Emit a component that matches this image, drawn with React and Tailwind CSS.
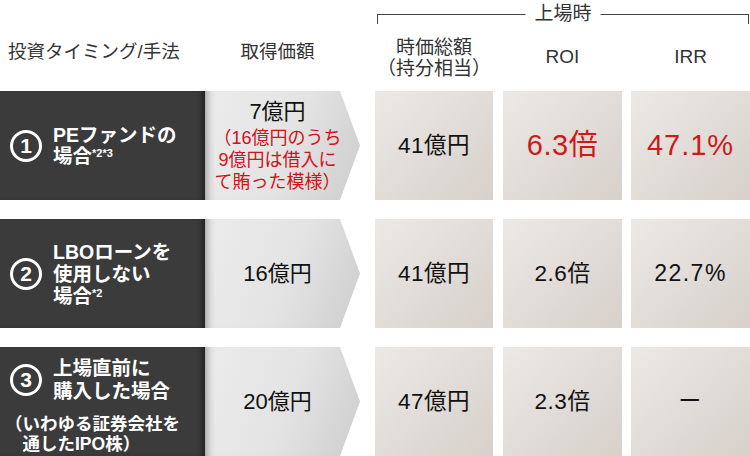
const font = { fontFamily: '"Liberation Sans", "Noto Sans CJK JP", sans-serif' }

const rows = [
    {
        no: '1',
        label: (
            <div className="text-[19.5px] leading-[21px] font-bold text-white">
                <div>PEファンドの</div>
                <div>
                    場合<sup className="text-[11px]">*2*3</sup>
                </div>
            </div>
        ),
        price: (
            <>
                <div className="text-[22px] leading-[26px] text-[#111]">7億円</div>
                <div className="mt-[2px] text-[18px] leading-[22px] text-[#d0121b]">
                    <div>（16億円のうち</div>
                    <div>9億円は借入に</div>
                    <div>て賄った模様）</div>
                </div>
            </>
        ),
        cap: '41億円',
        roi: '6.3倍',
        irr: '47.1%',
        red: true,
    },
    {
        no: '2',
        label: (
            <div className="text-[19.5px] leading-[22px] font-bold text-white">
                <div>LBOローンを</div>
                <div>使用しない</div>
                <div>
                    場合<sup className="text-[11px]">*2</sup>
                </div>
            </div>
        ),
        price: <div className="text-[22px] text-[#111]">16億円</div>,
        cap: '41億円',
        roi: '2.6倍',
        irr: '22.7%',
    },
    {
        no: '3',
        label: (
            <div className="text-[19.5px] leading-[23px] font-bold text-white">
                <div>上場直前に</div>
                <div>購入した場合</div>
            </div>
        ),
        note: (
            <div className="mt-[11px] pl-[5px] text-[17.5px] leading-[20px] font-bold text-white">
                <div>（いわゆる証券会社を</div>
                <div className="pl-[1em]">通したIPO株）</div>
            </div>
        ),
        price: <div className="text-[22px] text-[#111]">20億円</div>,
        cap: '47億円',
        roi: '2.3倍',
        irr: 'ー',
        pad: 'pt-[7px]',
    },
]

const Circle = ({ n }) => (
    <div className="flex h-[32px] w-[32px] shrink-0 items-center justify-center rounded-full border-[3px] border-white text-[21px] leading-none font-bold text-white">
        {n}
    </div>
)

const Cell = ({ w, className = '', children }) => (
    <div
        className={`flex items-center justify-center bg-linear-to-br from-[#ece9e6] to-[#d7d0cb] ${w} ${className}`}
    >
        {children}
    </div>
)

const Row = ({ row, first }) => (
    <div className={`flex h-[109px] ${first ? '' : 'mt-[19px]'}`}>
        <div
            className={`relative z-10 flex w-[205px] flex-col justify-center bg-[#3b3b3b] shadow-[inset_-6px_0_6px_-4px_rgba(0,0,0,0.55)] ${row.pad || ''}`}
        >
            <div className="flex items-center gap-[11px] pl-[10px]">
                <Circle n={row.no} />
                {row.label}
            </div>
            {row.note}
        </div>
        <div className="flex w-[155px] flex-col items-center justify-center bg-[linear-gradient(110deg,#ececec_0%,#e3e3e3_55%,#cdcdcd_100%)] pr-[10px] text-center shadow-[inset_10px_0_8px_-8px_rgba(0,0,0,0.35)] [clip-path:polygon(0_0,135px_0,100%_50%,135px_100%,0_100%)]">
            {row.price}
        </div>
        <Cell w="w-[118px]" className="ml-[15px] text-[22.5px] tracking-[0.5px] text-[#111]">
            {row.cap}
        </Cell>
        <Cell
            w="w-[119px]"
            className={`ml-[10px] ${row.red ? 'text-[29px] tracking-[0.5px] text-[#cc1a1a]' : 'text-[22.5px] tracking-[0.5px] text-[#111]'}`}
        >
            {row.roi}
        </Cell>
        <Cell
            w="w-[119px]"
            className={`ml-[9px] ${row.red ? 'text-[29px] tracking-[1px] text-[#cc1a1a]' : 'text-[23px] tracking-[1.5px] text-[#111]'}`}
        >
            {row.irr}
        </Cell>
    </div>
)

export default function App() {
    return (
        <div className="h-[456px] w-[750px] overflow-hidden bg-white" style={font}>
            <div className="flex h-[91px]">
                <div className="flex w-[360px] items-center pt-[12px] text-[18.5px] text-[#333]">
                    <div className="w-[205px] pl-[8px]">投資タイミング/手法</div>
                    <div className="w-[145px] text-center">取得価額</div>
                </div>
                <div className="ml-[15px] w-[375px]">
                    <div className="relative mt-[14px] ml-[2px] h-[10px] w-[372px] border-x border-t border-[#444]">
                        <div className="absolute -top-[13px] left-1/2 -translate-x-1/2 bg-white px-[9px] text-[19px] leading-[24px] text-[#333]">
                            上場時
                        </div>
                    </div>
                    <div className="flex h-[67px] items-center text-[19px] text-[#333]">
                        <div className="w-[118px] text-center leading-[21px]">
                            <div>時価総額</div>
                            <div>（持分相当）</div>
                        </div>
                        <div className="ml-[10px] w-[119px] text-center">ROI</div>
                        <div className="ml-[9px] w-[119px] text-center">IRR</div>
                    </div>
                </div>
            </div>
            {rows.map((r, i) => (
                <Row key={r.no} row={r} first={i === 0} />
            ))}
        </div>
    )
}
